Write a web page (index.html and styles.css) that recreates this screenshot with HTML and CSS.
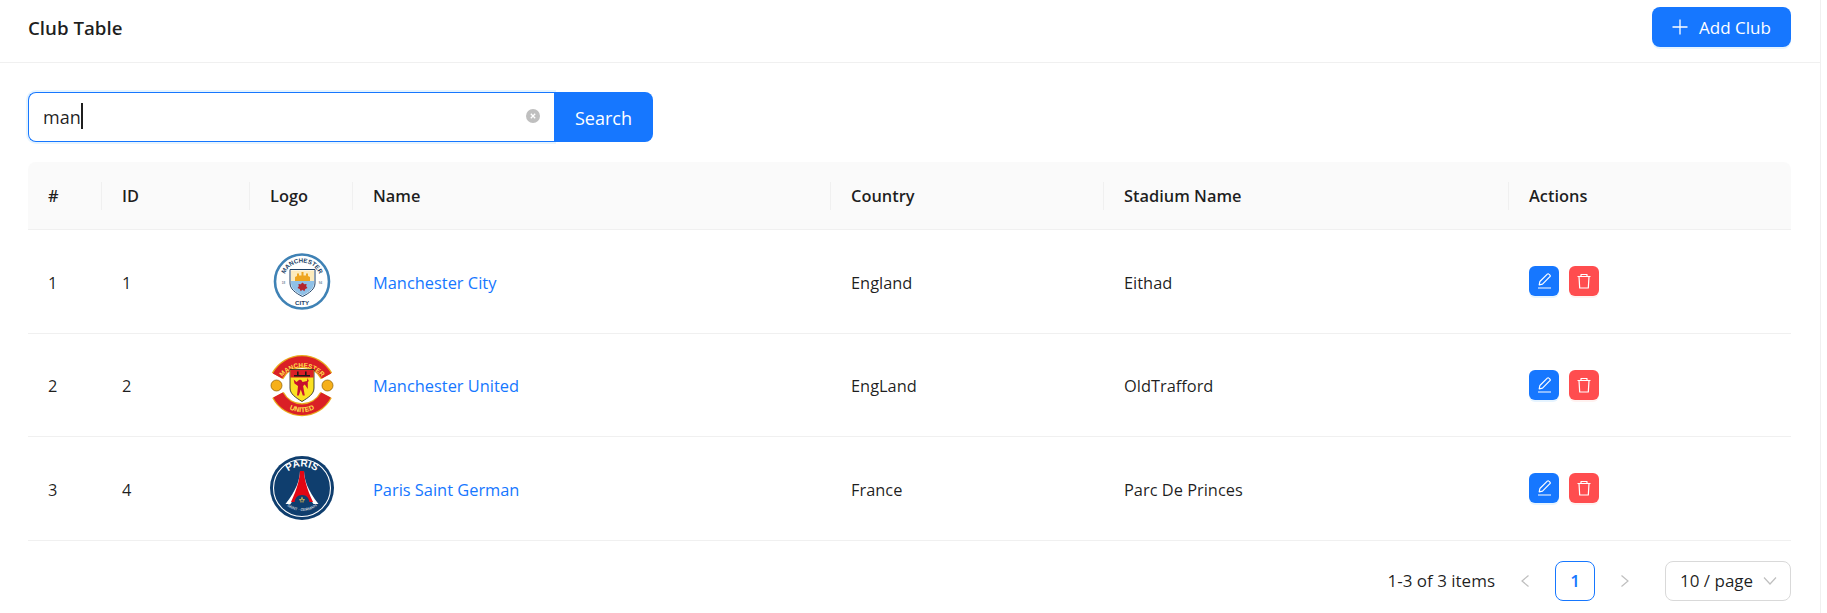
FILE: index.html
```html
<!DOCTYPE html>
<html lang="en">
<head>
<meta charset="utf-8">
<title>Club Table</title>
<link rel="stylesheet" href="styles.css">
</head>
<body>
<div class="page">
  <header class="topbar">
    <h1 class="title">Club Table</h1>
    <button class="btn btn-add" type="button">
      <svg class="plus" viewBox="0 0 16 16" width="16" height="16"><path d="M8 .5v15M.5 8h15" fill="none" stroke="#fff" stroke-width="1.3"/></svg>
      <span>Add Club</span>
    </button>
  </header>
  <main class="content">
    <form class="search">
      <div class="search-input">
        <span class="search-value">man</span><span class="caret"></span>
        <svg class="clear" viewBox="0 0 14 14" width="14" height="14"><circle cx="7" cy="7" r="7" fill="#bfbfbf"/><path d="M4.8 4.8l4.4 4.4M9.2 4.8l-4.4 4.4" stroke="#fff" stroke-width="1.3"/></svg>
      </div>
      <button class="search-btn" type="button">Search</button>
    </form>
    <table class="table">
      <colgroup>
        <col class="c-idx"><col class="c-id"><col class="c-logo"><col class="c-name"><col class="c-country"><col class="c-stadium"><col class="c-actions">
      </colgroup>
      <thead>
        <tr><th>#</th><th>ID</th><th>Logo</th><th>Name</th><th>Country</th><th>Stadium Name</th><th>Actions</th></tr>
      </thead>
      <tbody>
        <tr>
          <td>1</td><td>1</td>
          <td>
            <svg class="logo" viewBox="0 0 64 64" width="64" height="64">
              <defs>
                <path id="city-top" d="M13.500 32a18.500 18.500 0 0 1 37 0"/>
              </defs>
              <circle cx="32" cy="32.500" r="27" fill="#fff" stroke="#3f82b5" stroke-width="2.600"/>
              <text class="logo-text" font-size="6.200" font-weight="700" fill="#1c3f66"><textPath href="#city-top" startOffset="50%" text-anchor="middle">MANCHESTER</textPath></text>
              <text class="logo-text" x="32" y="56" text-anchor="middle" font-size="6.200" font-weight="700" fill="#1c3f66">CITY</text>
              <path d="M20 20.500h25v13.500c0 6-5.500 10-12.500 13.500C25.500 44 20 40 20 34z" fill="#fff" stroke="#1c3f66" stroke-width="1"/>
              <path d="M21 21.500h23v10.500H21z" fill="#fdebbd"/>
              <path d="M21 32h23v2c0 5.500-4.500 9-11.500 12.500C25.500 43 21 39.500 21 34z" fill="#8fc1e8"/>
              <path d="M25 32v-4l2-1v-2.500h2v2h2.500v-3.500h2v3.500h2.500v-2h2v2.500l2 1v4z" fill="#eea51f"/>
              <path d="M32.500 33.500l1.800 1.800 2.300-.4-.4 2.300 1.300 1.800-2.200 1-1 2.200-1.800-1.400-1.800 1.400-1-2.200-2.200-1 1.300-1.800-.4-2.300 2.300.4z" fill="#b3262e"/>
              <text class="logo-text" x="13.500" y="34.500" text-anchor="middle" font-size="3" fill="#1c3f66">18</text>
              <text class="logo-text" x="50.500" y="34.500" text-anchor="middle" font-size="3" fill="#1c3f66">94</text>
            </svg>
          </td>
          <td><a class="club-link" href="#">Manchester City</a></td>
          <td>England</td><td>Eithad</td>
          <td>
            <div class="actions">
              <button class="act act-edit" type="button"><svg viewBox="0 0 18 18" width="18" height="18"><path d="M3 16h13M4.200 12.800l.7-3.300 7.400-7.400c.5-.5 1.200-.5 1.600 0l1 1c.5.500.5 1.200 0 1.600l-7.400 7.400z" fill="none" stroke="#fff" stroke-width="1.200" stroke-linejoin="round"/></svg></button>
              <button class="act act-del" type="button"><svg viewBox="0 0 18 18" width="18" height="18"><path d="M2.500 4.500h13M6 4.500V2.500h6v2M4 4.500l.7 11.500h8.600L14 4.500" fill="none" stroke="#fff" stroke-width="1.200" stroke-linejoin="round"/></svg></button>
            </div>
          </td>
        </tr>
        <tr>
          <td>2</td><td>2</td>
          <td>
            <svg class="logo" viewBox="0 0 64 64" width="64" height="64">
              <defs>
                <path id="mu-top" d="M10 27a25.500 25.500 0 0 1 44 0"/>
                <path id="mu-bot" d="M12 50.500A27.500 27.500 0 0 0 52 50.500"/>
              </defs>
              <path d="M7.500 23A28 28 0 0 1 56.500 23" fill="none" stroke="#e8a91c" stroke-width="13"/>
              <path d="M7.500 23A28 28 0 0 1 56.500 23" fill="none" stroke="#da1f26" stroke-width="10.500"/>
              <text class="logo-text" font-size="6.400" font-weight="700" fill="#ffe14d"><textPath href="#mu-top" startOffset="50%" text-anchor="middle">MANCHESTER</textPath></text>
              <path d="M8 42A27 27 0 0 0 56 42" fill="none" stroke="#e8a91c" stroke-width="13"/>
              <path d="M8 42A27 27 0 0 0 56 42" fill="none" stroke="#da1f26" stroke-width="10.500"/>
              <text class="logo-text" font-size="7" font-weight="700" fill="#ffe14d"><textPath href="#mu-bot" startOffset="50%" text-anchor="middle">UNITED</textPath></text>
              <circle cx="6.500" cy="32.500" r="5.500" fill="#f6b01a" stroke="#8a5a00" stroke-width=".7"/>
              <circle cx="57.500" cy="32.500" r="5.500" fill="#f6b01a" stroke="#8a5a00" stroke-width=".7"/>
              <path d="M20 16.500h24v18.500c0 6-5.500 9.500-12 13.500C25.500 44.500 20 41 20 35z" fill="#fbe122" stroke="#1a1a1a" stroke-width=".8"/>
              <path d="M20.400 17h23.200v7.500H20.400z" fill="#da1f26"/>
              <path d="M24 22h16v1.600H24zM27 18.500h1.600v3.500H27zM35 18.500h1.600v3.500H35z" fill="#1a1a1a"/>
              <path d="M29 27c2-1 3 .5 3.500 2l4.500-1 .5-3 1.300 3-1 1v7l-3-4.500-1.700 1.500 1.700 9.500h-2l-2-6-2 6H27l1-9.500-3.500-2.500-.8-4 2.800 2.500z" fill="#c8102e"/>
            </svg>
          </td>
          <td><a class="club-link" href="#">Manchester United</a></td>
          <td>EngLand</td><td>OldTrafford</td>
          <td>
            <div class="actions">
              <button class="act act-edit" type="button"><svg viewBox="0 0 18 18" width="18" height="18"><path d="M3 16h13M4.200 12.800l.7-3.300 7.400-7.400c.5-.5 1.200-.5 1.600 0l1 1c.5.500.5 1.200 0 1.600l-7.400 7.400z" fill="none" stroke="#fff" stroke-width="1.200" stroke-linejoin="round"/></svg></button>
              <button class="act act-del" type="button"><svg viewBox="0 0 18 18" width="18" height="18"><path d="M2.500 4.500h13M6 4.500V2.500h6v2M4 4.500l.7 11.500h8.600L14 4.500" fill="none" stroke="#fff" stroke-width="1.200" stroke-linejoin="round"/></svg></button>
            </div>
          </td>
        </tr>
        <tr>
          <td>3</td><td>4</td>
          <td>
            <svg class="logo" viewBox="0 0 64 64" width="64" height="64">
              <defs>
                <path id="psg-top" d="M10.500 32a21.500 21.500 0 0 1 43 0"/>
                <path id="psg-bot" d="M8.500 36a24 24 0 0 0 47 0"/>
              </defs>
              <circle cx="32" cy="32" r="32" fill="#0f3e6e"/>
              <circle cx="32" cy="32" r="28.500" fill="none" stroke="#fff" stroke-width="1.100"/>
              <text class="logo-text" font-size="10" font-weight="700" fill="#fff"><textPath href="#psg-top" startOffset="50%" text-anchor="middle">PARIS</textPath></text>
              <text class="logo-text" font-size="3.800" fill="#fff"><textPath href="#psg-bot" startOffset="50%" text-anchor="middle">SAINT · GERMAIN</textPath></text>
              <path d="M30 15h4c.4 9 3.500 19 14.500 33h-5C37 39 35 30 32 23c-3 7-5 16-11.500 25h-5C26.500 34 29.600 24 30 15z" fill="#fff"/>
              <path d="M30 15h4c.4 8 2.500 17 9 31H21c6.500-14 8.600-23 9-31z" fill="#e30613"/>
              <path d="M24.500 48c0-6 3-9 7.500-9s7.500 3 7.500 9z" fill="#0f3e6e"/>
              <path d="M32 40.500c1 1.300 1 2.500.4 3.500h-.8c-.6-1-.6-2.200.4-3.500zM29.200 43.200c1-.4 1.900 0 2.200 1.300l-.9.300c-.2-.5-.7-.4-.9-.2zM34.800 43.200c-1-.4-1.900 0-2.200 1.300l.9.300c.2-.5.700-.4.900-.2zM30 45.500h4v.8h-4z" fill="#e0b84e"/>
            </svg>
          </td>
          <td><a class="club-link" href="#">Paris Saint German</a></td>
          <td>France</td><td>Parc De Princes</td>
          <td>
            <div class="actions">
              <button class="act act-edit" type="button"><svg viewBox="0 0 18 18" width="18" height="18"><path d="M3 16h13M4.200 12.800l.7-3.300 7.400-7.400c.5-.5 1.200-.5 1.600 0l1 1c.5.500.5 1.200 0 1.600l-7.400 7.400z" fill="none" stroke="#fff" stroke-width="1.200" stroke-linejoin="round"/></svg></button>
              <button class="act act-del" type="button"><svg viewBox="0 0 18 18" width="18" height="18"><path d="M2.500 4.500h13M6 4.500V2.500h6v2M4 4.500l.7 11.500h8.600L14 4.500" fill="none" stroke="#fff" stroke-width="1.200" stroke-linejoin="round"/></svg></button>
            </div>
          </td>
        </tr>
      </tbody>
    </table>
    <nav class="pager">
      <span class="pager-total">1-3 of 3 items</span>
      <svg class="pager-arrow" viewBox="0 0 12 14" width="12" height="14"><path d="M9.500 1.500L3 7l6.500 5.500" fill="none" stroke="#bfbfbf" stroke-width="1.200"/></svg>
      <span class="pager-cur">1</span>
      <svg class="pager-arrow" viewBox="0 0 12 14" width="12" height="14"><path d="M2.500 1.500L9 7l-6.500 5.500" fill="none" stroke="#bfbfbf" stroke-width="1.200"/></svg>
      <div class="pager-size">
        <span>10 / page</span>
        <svg viewBox="0 0 14 10" width="14" height="10"><path d="M1 1.500L7 8l6-6.500" fill="none" stroke="#bfbfbf" stroke-width="1.200"/></svg>
      </div>
    </nav>
  </main>
</div>
</body>
</html>
```
FILE: styles.css
```css
* { box-sizing: border-box; }
html, body { margin: 0; height: 100%; background: #fff; }
body {
  font-family: "Open Sans", "Noto Sans", "Liberation Sans", sans-serif;
  font-size: 16.400px;
  color: rgba(0, 0, 0, .88);
  overflow: hidden;
}
.page {
  width: 1821px;
  height: 613px;
  border-right: 1px solid #f0f0f0;
}
.topbar {
  height: 63px;
  padding: 0 29px 8px 28px;
  display: flex;
  align-items: center;
  justify-content: space-between;
  border-bottom: 1px solid #f0f0f0;
}
.title { margin: 0; font-size: 18.700px; font-weight: 600; line-height: 1.5; margin-top: 2px; }
.btn-add {
  width: 139px;
  height: 40px;
  border: 0;
  border-radius: 8px;
  background: #1677ff;
  color: #fff;
  font: inherit;
  font-size: 17px;
  display: flex;
  align-items: center;
  justify-content: center;
  gap: 11px;
  box-shadow: 0 2px 0 rgba(5, 145, 255, .1);
  padding: 0;
}
.plus { display: block; }
.content { padding: 29px 29px 0 28px; }
.search { display: flex; width: 625px; height: 50px; }
.search-input {
  flex: 1;
  display: flex;
  align-items: center;
  padding: 0 12px 0 14px;
  border: 1px solid #1677ff;
  border-right: 0;
  border-radius: 8px 0 0 8px;
  box-shadow: 0 0 0 2px rgba(5, 145, 255, .1);
  font-size: 18px;
}
.search-value { line-height: 1; }
.caret { width: 2px; height: 26px; background: #1f1f1f; margin-top: -2px; }
.clear { margin-left: auto; margin-right: 2px; margin-top: -3px; }
.search-btn {
  width: 99px;
  border: 0;
  border-radius: 0 8px 8px 0;
  background: #1677ff;
  color: #fff;
  font: inherit;
  font-size: 18px;
  padding: 2px 0 0;
}
.table {
  width: 1763px;
  margin-top: 20px;
  border-collapse: separate;
  border-spacing: 0;
  table-layout: fixed;
}
.c-idx { width: 74px; }
.c-id { width: 148px; }
.c-logo { width: 103px; }
.c-name { width: 478px; }
.c-country { width: 273px; }
.c-stadium { width: 405px; }
.c-actions { width: 282px; }
th, td { padding: 0 0 0 20px; text-align: left; }
th {
  position: relative;
  height: 68px;
  background: #fafafa;
  border-bottom: 1px solid #f0f0f0;
  font-weight: 600;
}
th:first-child { border-top-left-radius: 8px; }
th:last-child { border-top-right-radius: 8px; }
th:not(:last-child)::after {
  content: "";
  position: absolute;
  top: 50%;
  right: 0;
  width: 1px;
  height: 28px;
  margin-top: -14px;
  background: #f0f0f0;
}
td { height: 103.500px; padding-top: 2px; border-bottom: 1px solid #f0f0f0; }
.logo { display: block; margin: -2px 0 0; }
.club-link { color: #1677ff; text-decoration: none; }
.logo-text { font-family: "Liberation Sans", sans-serif; }
.actions { display: flex; gap: 10px; margin-top: -2px; }
.act {
  width: 30px;
  height: 30px;
  border: 0;
  border-radius: 6px;
  padding: 0;
  display: flex;
  align-items: center;
  justify-content: center;
}
.act-edit { background: #1677ff; box-shadow: 0 2px 0 rgba(5, 145, 255, .1); }
.act-del { background: #ff4d4f; box-shadow: 0 2px 0 rgba(255, 38, 5, .06); }
.pager {
  display: flex;
  align-items: center;
  justify-content: flex-end;
  margin-top: 20px;
  height: 40px;
  font-size: 17px;
}
.pager-total { margin-right: 24px; }
.pager-arrow { display: block; }
.pager-cur {
  width: 40px;
  height: 40px;
  margin: 0 24px;
  display: flex;
  align-items: center;
  justify-content: center;
  border: 1px solid #1677ff;
  border-radius: 8px;
  color: #1677ff;
  font-weight: 600;
}
.pager-size {
  width: 126px;
  height: 40px;
  margin-left: 34px;
  display: flex;
  align-items: center;
  justify-content: space-between;
  padding: 0 13px 0 14px;
  border: 1px solid #d9d9d9;
  border-radius: 8px;
}
```
